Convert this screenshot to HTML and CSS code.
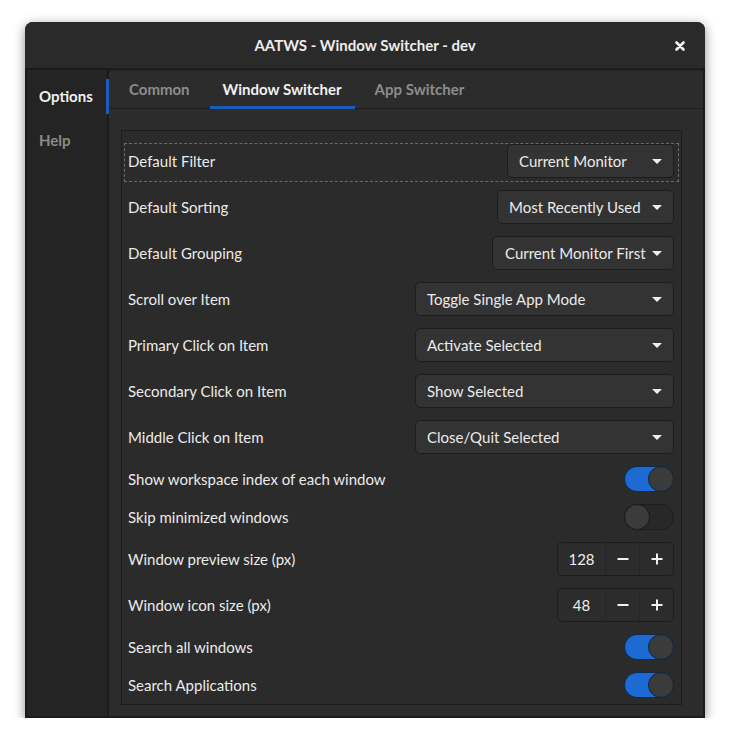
FILE: index.html
```
<!DOCTYPE html>
<html>
<head>
<meta charset="utf-8">
<link rel="stylesheet" href="styles.css">
</head>
<body>
<div class="window">
  <header class="titlebar">
    <div class="title">AATWS - Window Switcher - dev</div>
    <div class="close">
      <svg width="10" height="10" viewBox="0 0 10 10"><path d="M1.5 1.5 L8.5 8.5 M8.5 1.5 L1.5 8.5" stroke="#f2f2f2" stroke-width="2.6" stroke-linecap="round"/></svg>
    </div>
  </header>
  <div class="body">
    <nav class="sidebar">
      <div class="side-item active">Options</div>
      <div class="side-item">Help</div>
    </nav>
    <main class="content">
      <div class="tabs">
        <div class="tab">Common</div>
        <div class="tab active">Window Switcher</div>
        <div class="tab">App Switcher</div>
      </div>
      <div class="page">
        <div class="frame">
          <div class="row focused">
            <span class="label">Default Filter</span>
            <div class="combo combo-filter"><span>Current Monitor</span><i class="arrow"></i></div>
          </div>
          <div class="row">
            <span class="label">Default Sorting</span>
            <div class="combo combo-sort"><span>Most Recently Used</span><i class="arrow"></i></div>
          </div>
          <div class="row">
            <span class="label">Default Grouping</span>
            <div class="combo combo-group"><span>Current Monitor First</span><i class="arrow"></i></div>
          </div>
          <div class="row">
            <span class="label">Scroll over Item</span>
            <div class="combo combo-wide"><span>Toggle Single App Mode</span><i class="arrow"></i></div>
          </div>
          <div class="row">
            <span class="label">Primary Click on Item</span>
            <div class="combo combo-wide"><span>Activate Selected</span><i class="arrow"></i></div>
          </div>
          <div class="row">
            <span class="label">Secondary Click on Item</span>
            <div class="combo combo-wide"><span>Show Selected</span><i class="arrow"></i></div>
          </div>
          <div class="row">
            <span class="label">Middle Click on Item</span>
            <div class="combo combo-wide"><span>Close/Quit Selected</span><i class="arrow"></i></div>
          </div>
          <div class="row">
            <span class="label">Show workspace index of each window</span>
            <div class="switch on"><i class="knob"></i></div>
          </div>
          <div class="row">
            <span class="label">Skip minimized windows</span>
            <div class="switch"><i class="knob"></i></div>
          </div>
          <div class="row">
            <span class="label">Window preview size (px)</span>
            <div class="spin">
              <span class="spin-value">128</span>
              <span class="spin-btn"><svg width="12" height="12" viewBox="0 0 12 12"><path d="M0.5 6 H11.5" stroke="#f0f0f0" stroke-width="2"/></svg></span>
              <span class="spin-btn"><svg width="12" height="12" viewBox="0 0 12 12"><path d="M0.5 6 H11.5 M6 0.5 V11.5" stroke="#f0f0f0" stroke-width="2"/></svg></span>
            </div>
          </div>
          <div class="row">
            <span class="label">Window icon size (px)</span>
            <div class="spin">
              <span class="spin-value">48</span>
              <span class="spin-btn"><svg width="12" height="12" viewBox="0 0 12 12"><path d="M0.5 6 H11.5" stroke="#f0f0f0" stroke-width="2"/></svg></span>
              <span class="spin-btn"><svg width="12" height="12" viewBox="0 0 12 12"><path d="M0.5 6 H11.5 M6 0.5 V11.5" stroke="#f0f0f0" stroke-width="2"/></svg></span>
            </div>
          </div>
          <div class="row">
            <span class="label">Search all windows</span>
            <div class="switch on"><i class="knob"></i></div>
          </div>
          <div class="row">
            <span class="label">Search Applications</span>
            <div class="switch on"><i class="knob"></i></div>
          </div>
        </div>
      </div>
    </main>
  </div>
</div>
</body>
</html>
```
FILE: styles.css
```
* { box-sizing: border-box; }
html, body { margin: 0; padding: 0; background: #ffffff; }
body {
  font-family: "Lato", "Noto Sans", sans-serif;
  font-size: 15px;
  color: #eeeeee;
}
.window {
  margin: 22px 0 0 25px;
  width: 680px;
  height: 696px;
  border-radius: 8px 8px 0 0;
  background: #2b2b2b;
  box-shadow: 0 3px 12px rgba(0,0,0,0.45);
  display: flex;
  flex-direction: column;
  overflow: hidden;
}
.titlebar {
  height: 48px;
  flex: none;
  background: #2a2a2a;
  border-bottom: 2px solid #1b1b1b;
  display: flex;
  align-items: center;
  justify-content: center;
  position: relative;
}
.title {
  font-weight: bold;
  font-size: 15px;
  color: #ececec;
}
.close {
  position: absolute;
  right: 20px;
  top: 19px;
  width: 10px;
  height: 10px;
  display: flex;
}
.body {
  flex: 1;
  display: flex;
  border: 2px solid #1b1b1b;
  border-top: 0;
  min-height: 0;
}
.sidebar {
  width: 82px;
  flex: none;
  background: #242424;
  border-right: 2px solid #1b1b1b;
  padding-top: 4px;
}
.side-item {
  height: 44px;
  display: flex;
  align-items: center;
  padding-left: 12px;
  font-weight: bold;
  color: #8a8a8a;
  position: relative;
}
.side-item.active { color: #f0f0f0; }
.side-item.active::after {
  content: "";
  position: absolute;
  right: -2px;
  top: 5px;
  bottom: 4px;
  width: 3px;
  background: #1b5eb8;
}
.content {
  flex: 1;
  display: flex;
  flex-direction: column;
  background: #2c2c2c;
  border-top: 1px solid #232323;
}
.tabs {
  height: 38px;
  flex: none;
  display: flex;
  gap: 7px;
  padding-left: 7px;
  border-bottom: 1px solid #1e1e1e;
}
.tab {
  padding: 1px 13px 0;
  display: flex;
  align-items: center;
  font-weight: bold;
  color: #8c8c8c;
  border-bottom: 3px solid transparent;
  margin-bottom: -1px;
}
.tab.active {
  color: #f0f0f0;
  border-bottom-color: #1b5eb8;
}
.page {
  flex: 1;
  padding: 21px 21px 11px 12px;
  display: flex;
}
.frame {
  flex: 1;
  border: 1px solid #1c1c1c;
  background: #2b2b2b;
  padding: 13px 7px 0 6px;
  display: flex;
  flex-direction: column;
  gap: 12px;
}
.row {
  display: flex;
  align-items: center;
  justify-content: space-between;
  position: relative;
}
.row.focused::before {
  content: "";
  position: absolute;
  left: -4px;
  right: -5px;
  top: -1px;
  bottom: -4px;
  border: 1px dashed #6a6a6a;
  pointer-events: none;
}
.label { color: #eaeaea; }
.combo {
  height: 34px;
  background: #333333;
  border: 1px solid #1d1d1d;
  border-radius: 5px;
  display: flex;
  align-items: center;
  justify-content: space-between;
  padding: 0 11px 0 11px;
  color: #eaeaea;
}
.combo-filter { width: 167px; }
.combo-sort { width: 177px; }
.combo-group { width: 182px; padding-left: 12px; }
.combo-wide { width: 259px; }
.arrow {
  width: 0;
  height: 0;
  border-left: 5px solid transparent;
  border-right: 5px solid transparent;
  border-top: 5px solid #eeeeee;
  margin-top: 1px;
}
.switch {
  width: 50px;
  height: 26px;
  border-radius: 13px;
  background: #282828;
  border: 1px solid #1d1d1d;
  position: relative;
}
.switch .knob {
  position: absolute;
  top: -1px;
  left: -1px;
  width: 26px;
  height: 26px;
  border-radius: 50%;
  background: #3b3b3b;
  border: 1px solid #1a1a1a;
}
.switch.on {
  background: #1c6ad2;
  border-color: #0f2a4d;
}
.switch.on .knob {
  left: auto;
  right: -1px;
  border-color: #0e2440;
}
.spin {
  height: 34px;
  width: 117px;
  display: flex;
  border: 1px solid #1d1d1d;
  border-radius: 5px;
  background: #2c2c2c;
  overflow: hidden;
}
.spin-value {
  width: 47px;
  display: flex;
  align-items: center;
  justify-content: center;
  color: #eeeeee;
}
.spin-btn {
  flex: 1;
  display: flex;
  align-items: center;
  justify-content: center;
  border-left: 1px solid #262626;
}
```
